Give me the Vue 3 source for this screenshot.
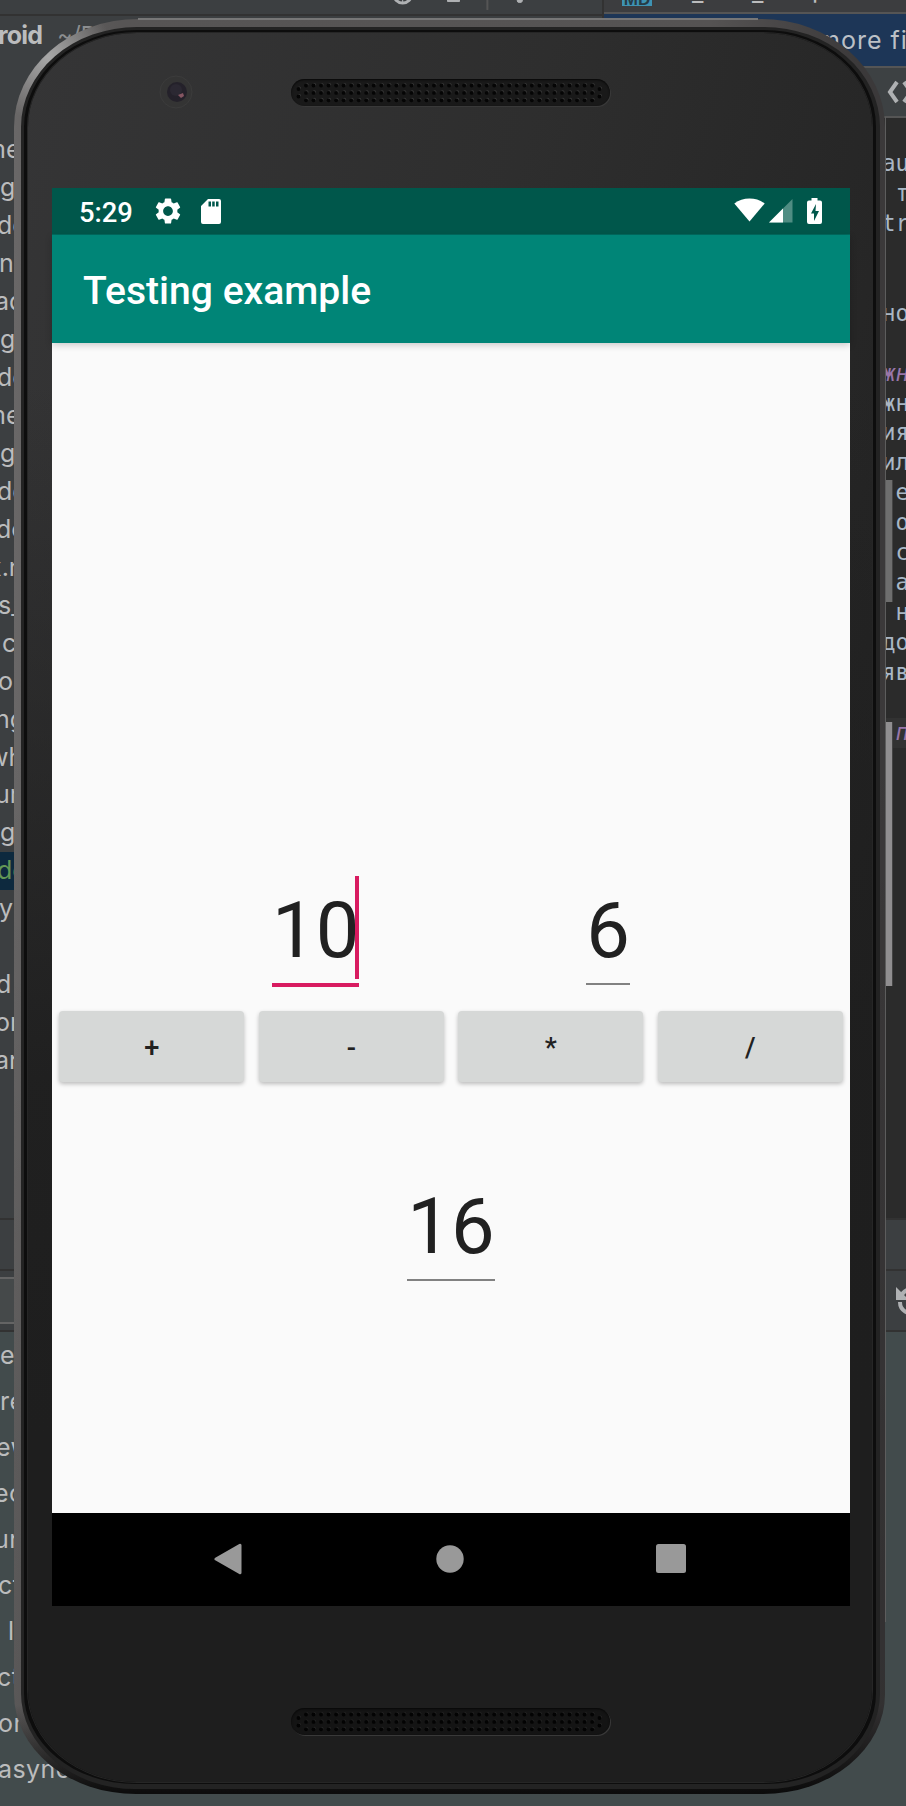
<script setup>
const tree = [
  ['me', -16], ['g', 0], ['de', -3], ['n', -1], ['ad', -5], ['g', 0], ['de', -3], ['me', -16],
  ['g', 0], ['de', -3], ['do', -4], ['x.n', -12], ['s_', -2], ['c', 2], ['o', -2], ['ng', -5],
  ['wh', -12], ['ur', -5], ['g', 0], ['de', -3, true], ['yn', -1], ['', 0], ['d', -4], ['or', -5], ['ar', -5],
]
const log = [
  ['e', 0], ['re', 0], ['ew', -4], ['ec', -6], ['ur', -6], ['ct', -2], ['l', 8], ['ct', -3], ['or', -2], ['async', -2],
]
const code = [
  ['au'], [' т'], ['tr'], [''], [''], ['но'], [''], ['жн', 'doc'], ['жн'], ['ия'], ['ил'], [' е'], [' о'],
  [' с'], [' а'], [' н'], ['до'], ['яв'], [''], [' п', 'doc hot'],
]
const keys = ['+', '-', '*', '/']
const dots = []
for (let i = 0; i < 39; i++) for (let j = 0; j < 3; j++) dots.push([15 + i * 7.53, 6.5 + j * 7.4])
for (const x of [7.5, 308.5]) for (const y of [10, 17.5]) dots.push([x, y])
</script>

<template>
  <div class="desk">
    <div class="ide">
      <div class="topbar">
        <svg class="tools" width="604" height="14" viewBox="0 0 604 14">
          <circle cx="404" cy="-6" r="9" fill="none" stroke="#afb1b3" stroke-width="3" />
          <path d="M404 -2v5M449 0h12v1.500h-12zM519 0h5v1a2.500 1.500 0 0 1-5 0z" fill="#afb1b3" stroke="#afb1b3" stroke-width="1" />
          <path d="M489 0v10" stroke="#555" stroke-width="2" />
        </svg>
        <div class="tabs">
          <span class="md">MD</span>
          <span class="tabname">_</span><span class="tabname">_</span><span class="tabname">p</span>
        </div>
      </div>
      <div class="middle">
        <div class="project">
          <div class="heading"><b>roid</b><span>~/D</span></div>
          <div v-for="(r, i) in tree" :key="i" class="node" :class="{ picked: r[2] }">
            <span :style="{ marginLeft: r[1] + 'px' }">{{ r[0] }}</span>
          </div>
        </div>
        <div class="editor">
          <div class="banner">more fi</div>
          <div class="views">
            <svg width="30" height="24" viewBox="0 0 30 24"><path d="M11 2L4 12l7 10M18 2l7 10-7 10" fill="none" stroke="#afb1b3" stroke-width="4" /></svg>
          </div>
          <div class="code">
            <div v-for="(l, i) in code" :key="i" class="line" :class="l[1]">{{ l[0] }}</div>
            <i class="bar one"></i><i class="bar two"></i>
          </div>
        </div>
      </div>
      <div class="strip"></div>
      <div class="strip search">
        <i class="field"></i>
        <svg width="22" height="32" viewBox="0 0 22 32"><path d="M5 12A11 11 0 0 1 20 5M4 17a11 11 0 0 0 16 10" fill="none" stroke="#afb1b3" stroke-width="4" /><path d="M0 2v13h13z" fill="#afb1b3" /></svg>
      </div>
      <div class="log">
        <div v-for="(r, i) in log" :key="i" class="entry"><span :style="{ marginLeft: r[1] + 'px' }">{{ r[0] }}</span></div>
      </div>
    </div>

    <div class="phone">
      <div class="groove">
        <div class="face">
          <div class="forehead">
            <svg class="camera" width="34" height="34" viewBox="0 0 34 34">
              <circle cx="17" cy="17" r="16" fill="#343434" stroke="#3c3c3c" />
              <circle cx="18" cy="17" r="10" fill="#24212a" />
              <circle cx="17" cy="15" r="6" fill="#2b2832" />
              <path d="M19 20l5-2 1 3-3 2z" fill="#855662" />
            </svg>
            <div class="speaker">
              <svg width="318" height="27" viewBox="0 0 318 27">
                <g v-for="(d, i) in dots" :key="i"><circle :cx="d[0] + .8" :cy="d[1] - .9" r="1.700" fill="#383838" /><circle :cx="d[0]" :cy="d[1]" r="1.900" fill="#050505" /></g>
              </svg>
            </div>
          </div>
          <div class="screen">
            <div class="status">
              <span class="time">5:29</span>
              <svg class="gear" width="30" height="30" viewBox="0 0 24 24"><path fill="#fff" d="M19.430 12.980c.040-.320.070-.640.070-.980s-.030-.660-.070-.980l2.110-1.650c.190-.150.240-.420.120-.640l-2-3.460c-.120-.220-.390-.300-.610-.220l-2.490 1c-.520-.400-1.080-.730-1.690-.980l-.380-2.650C14.460 2.180 14.250 2 14 2h-4c-.250 0-.460.180-.490.420l-.380 2.650c-.610.250-1.170.590-1.690.980l-2.490-1c-.230-.090-.490 0-.610.220l-2 3.460c-.130.220-.070.490.120.640l2.110 1.650c-.040.320-.070.650-.070.980s.030.660.070.980l-2.110 1.650c-.190.150-.240.420-.120.640l2 3.460c.120.220.390.300.610.220l2.490-1c.520.400 1.080.730 1.690.980l.380 2.650c.030.240.240.420.490.420h4c.250 0 .460-.180.490-.420l.380-2.650c.610-.250 1.170-.590 1.690-.980l2.490 1c.230.090.490 0 .610-.220l2-3.460c.120-.220.070-.490-.120-.640l-2.110-1.650zM12 15.900c-2.150 0-3.900-1.750-3.900-3.900s1.750-3.900 3.900-3.900 3.900 1.750 3.900 3.900-1.750 3.900-3.900 3.900z" /></svg>
              <svg class="sd" width="20" height="25" viewBox="0 0 20 25"><path fill="#fff" fill-rule="evenodd" d="M7 0h11q2 0 2 2v21q0 2-2 2H2q-2 0-2-2V7zM7.500 2.500v5H10v-5zM11.200 2.500v5h2.500v-5zM15 2.500v5h2.500v-5z" /></svg>
              <svg class="wifi" width="31" height="24" viewBox="0 0 31 24"><path fill="#fff" d="M15.500 23.500L.3 5.500Q7 .5 15.500.5t15.200 5z" /></svg>
              <svg class="cell" width="24" height="24" viewBox="0 0 24 24"><path fill="#4f8d83" d="M0 23.500L23.500 0v23.500z" /><path fill="#fff" d="M0 23.500L14 9.500v14z" /></svg>
              <svg class="battery" width="15" height="26" viewBox="0 0 15 26"><path fill="#fff" d="M4.500 0h6v2.500H13q2 0 2 2V24q0 2-2 2H2q-2 0-2-2V4.500q0-2 2-2h2.500z" /><path fill="#00574b" d="M9 6L4 15.500h3V23l5-10H8.500z" /></svg>
            </div>
            <div class="appbar">Testing example</div>
            <div class="content">
              <div class="inputs">
                <div class="num active">10<i class="caret"></i></div>
                <div class="num">6</div>
              </div>
              <div class="keys"><button v-for="k in keys" :key="k" class="key">{{ k }}</button></div>
              <div class="result"><div class="num">16</div></div>
            </div>
            <div class="nav">
              <svg width="28" height="32" viewBox="0 0 28 32"><path d="M26 2.200v27.600L2 16z" fill="#999" stroke="#999" stroke-width="3" stroke-linejoin="round" /></svg>
              <svg width="28" height="28" viewBox="0 0 28 28"><circle cx="14" cy="14" r="13.700" fill="#999" /></svg>
              <svg width="30" height="29" viewBox="0 0 30 29"><rect width="30" height="29" rx="2.500" fill="#999" /></svg>
            </div>
          </div>
          <div class="chin">
            <div class="speaker low">
              <svg width="318" height="27" viewBox="0 0 318 27">
                <g v-for="(d, i) in dots" :key="i"><circle :cx="d[0] + .8" :cy="d[1] - .9" r="1.600" fill="#262626" /><circle :cx="d[0]" :cy="d[1]" r="1.900" fill="#030303" /></g>
              </svg>
            </div>
          </div>
        </div>
      </div>
    </div>
    <i class="edge top"></i><i class="edge side"></i>
  </div>
</template>

<style>
body { margin: 0; background: #424b4c; }
</style>

<style scoped>
* { box-sizing: border-box; }
svg { display: block; flex: none; }
.desk { position: relative; width: 906px; height: 1806px; overflow: hidden; font: 25px/1 Inter, sans-serif; color: #bbbcbd; background: #424b4c; }
.ide { display: flex; flex-direction: column; }
.topbar { display: flex; height: 14px; background: #3c3f41; overflow: hidden; }
.tools { border-right: 2px solid #323232; }
.tabs { flex: 1; display: flex; align-items: flex-end; border-bottom: 2px solid #555; height: 14px; background: #3c3d3f; padding-left: 18px; }
.md { width: 30px; height: 22px; flex: none; margin-bottom: 6px; background: #3e93b3; color: #263b45; font: bold 17px/32px "Liberation Sans", sans-serif; text-align: center; }
.tabname { width: 12px; margin: 0 0 10px 40px; line-height: 20px; }
.tabname + .tabname { margin-left: 48px; }
.tabname:last-child { margin-bottom: 13px; }
.middle { display: grid; grid-template-columns: 604px 302px; height: 1204px; }
.project { background: #3c3f41; border-top: 2px solid #323232; border-right: 2px solid #323232; overflow: hidden; }
.heading { height: 115px; display: flex; gap: 15px; padding-top: 5px; line-height: 28px; margin-left: -2px; }
.heading b { font-size: 25px; letter-spacing: -.8px; }
.heading span { color: #8c8e90; font-size: 23px; }
.node { height: 37.970px; line-height: 37.970px; width: 200px; white-space: nowrap; }
.picked { background: #0d293e; color: #629755; }
.editor { background: #2b2b2b; overflow: hidden; }
.banner { height: 52px; background: #1d3657; line-height: 53px; padding-left: 214px; letter-spacing: 1px; white-space: nowrap; color: #bbc0c6; }
.views { height: 52px; background: #3d4143; border: solid #555; border-width: 2px 0; padding: 12px 0 0 282px; }
.code { position: relative; padding-top: 31px; font: 22.500px/29.950px "DejaVu Sans Mono", monospace; color: #a9b7c6; }
.line { padding-left: 278px; height: 29.950px; white-space: pre; }
.doc { color: #9876aa; font-style: italic; }
.hot { background: #323232; }
.bar { position: absolute; left: 282px; width: 7px; background: #6e6e6e; border-right: 1px solid #444; }
.one { top: 362px; height: 122px; }
.two { top: 604px; height: 264px; background: #908e90; }
.strip { height: 51px; background: #3c3f41; border-top: 2px solid #323232; }
.search { height: 64px; border-bottom: 3px solid #323232; display: flex; justify-content: space-between; align-items: center; }
.search svg { margin-right: -12px; }
.field { width: 400px; height: 47px; border: 2px solid #646464; border-left: 0; background: #45494a; }
.log { background: #424b4c; margin-top: -1px; }
.entry { height: 46px; line-height: 46px; letter-spacing: .4px; }

.phone { position: absolute; left: 14px; top: 19px; width: 871px; height: 1775px; padding: 8px 5px 5px 7px; border-radius: 124px 124px 122px 122px / 108px 108px 100px 100px;
  background: radial-gradient(circle at 34px 38px, #a8a8a8, rgba(130,130,130,0) 65px), linear-gradient(to bottom, rgba(0,0,0,0) 40%, rgba(0,0,0,.12) 80%, rgba(0,0,0,0.15) 95%, rgba(5,5,5,.9) 99.900%), linear-gradient(to right, #696767, #575555 12%, #555353 80%, #3b393a 97%); }
.groove { height: 100%; padding: 3px 4px 2px 4px; border-radius: 116px 116px 114px 114px / 100px 100px 96px 96px; background: #0d0d0d; border: solid #232323; border-width: 3px 4px 5px 3px; }
.face { height: 100%; border-radius: 109px 109px 109px 109px / 94px 94px 92px 92px; box-shadow: 0 0 0 1px #262626;
  background: linear-gradient(to bottom, rgba(30,30,30,0) 20%, rgba(30,30,30,.9) 60%, #1e1e1e 80%), linear-gradient(105deg, #353536, #2e2e2e 40%, #232323 80%, #1e1e1e); padding-left: 24px; display: flex; flex-direction: column; }
.forehead { height: 155px; display: flex; align-items: flex-start; padding: 42px 0 0 107px; }
.speaker { width: 319px; height: 27px; border-radius: 14px; background: #191919; box-shadow: 1px 1px 0 #393939, inset 0 1px 2px #080808; }
.forehead .speaker { margin: 4px 0 0 98px; }
.screen { width: 798px; height: 1418px; flex: none; display: flex; flex-direction: column; background: #fafafa; font-family: Roboto, sans-serif; color: #fff; }
.status { height: 47px; background: #00574b; border-bottom: 1px solid #006b5f; display: flex; align-items: center; flex: none; padding-left: 27px; }
.time { font-size: 27.400px; font-weight: 500; width: 55px; line-height: 46px; padding-top: 3px; }
.gear { margin-left: 19px; }
.sd { margin-left: 18px; }
.wifi { margin-left: 513px; margin-top: -2px; }
.cell { margin-left: 4px; }
.battery { margin-left: 14px; }
.appbar { height: 108px; flex: none; background: #008577; padding-left: 31px; font-size: 39.100px; line-height: 112px; font-weight: 500; box-shadow: 0 2px 7px rgba(0,0,0,.2); white-space: nowrap; }
.content { flex: 1; display: flex; flex-direction: column; color: #212121; padding-top: 527px; }
.inputs { display: flex; padding-left: 220px; gap: 227px; height: 141px; }
.num { position: relative; height: 115px; font-size: 77.700px; line-height: 122px; border-bottom: 2.500px solid #818181; }
.active { border-bottom: 4px solid #d81b60; height: 117px; }
.caret { position: absolute; right: 0; top: 6px; width: 4px; height: 103px; background: #d81b60; }
.keys { display: flex; gap: 14.600px; padding: 0 7.300px; }
.key { flex: 1; height: 71px; padding: 4px 0 0; border: 0; border-radius: 4px; background: #d6d8d7; color: #212121; font: 500 27.200px/67px Roboto, sans-serif; box-shadow: 0 2px 4px rgba(0,0,0,.25); }
.result { display: flex; justify-content: center; padding-top: 84px; }
.nav { height: 93px; flex: none; background: #000; display: flex; align-items: center; gap: 194px; padding: 0 0 2px 162px; }
.nav svg:last-child { margin-left: -2px; }
.chin { padding: 102px 0 0 239px; }
.low { background: #141414; }
.edge { position: absolute; background: #777; }
.top { left: 138px; top: 18px; width: 620px; height: 2px; }
.side { left: 885px; top: 117px; width: 1px; height: 1505px; background: #5d5d5d; }
</style>
